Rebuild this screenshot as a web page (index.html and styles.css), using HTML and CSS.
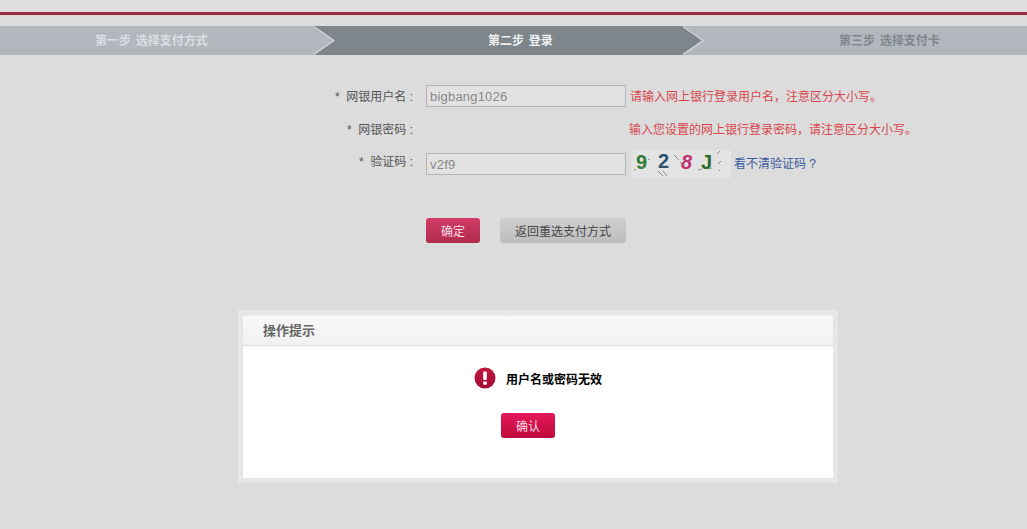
FILE: index.html
```html
<!DOCTYPE html>
<html lang="zh-CN">
<head>
    <meta charset="UTF-8">
    <meta name="viewport" content="width=device-width, initial-scale=1.0">
    <title>第二步 登录</title>
    <link rel="stylesheet" href="styles.css">
</head>
<body>
    <div class="top-line"></div>
    <div class="steps">
        <div class="step step-first">第一步&nbsp;&nbsp;选择支付方式</div>
        <div class="step step-current">第二步&nbsp;&nbsp;登录</div>
        <div class="step step-last">第三步&nbsp;&nbsp;选择支付卡</div>
    </div>
    <form class="login-form">
        <div class="form-row">
            <label for="username">*  网银用户名 :</label>
            <input type="text" id="username" value="bigbang1026">
            <span class="hint">请输入网上银行登录用户名，注意区分大小写。</span>
        </div>
        <div class="form-row row-pass">
            <label for="password">*  网银密码 :</label>
            <input type="password" id="password" class="input-plain">
            <span class="hint hint-pass">输入您设置的网上银行登录密码，请注意区分大小写。</span>
        </div>
        <div class="form-row row-code">
            <label for="code">*  验证码 :</label>
            <input type="text" id="code" value="v2f9">
            <svg class="captcha" width="100" height="28" viewBox="0 0 100 28">
                <rect width="100" height="28" fill="#e3e3e3"/>
                <text x="5" y="19" class="cap-num" fill="#2f7d35">9</text>
                <text x="27" y="18" class="cap-num" fill="#2b5270">2</text>
                <text x="50" y="19" class="cap-num cap-italic" fill="#c0336f">8</text>
                <text x="70" y="19" class="cap-num" fill="#2f6b2f">J</text>
                <path d="M3 20l2-.5M11 18l4-1M17 9l2 1M27 21l5 5M32 21l4 5M43 5l5 5M49 12l3 3M67 20l4-1M77 19l4-1M89 1l-3 3M90 11l-3 3M88 20l1 1" stroke="#8a8a8a" stroke-width="1" fill="none"/>
            </svg>
            <a class="refresh" href="#">看不清验证码 ?</a>
        </div>
        <div class="form-actions">
            <button type="button" class="btn btn-ok">确定</button>
            <button type="button" class="btn btn-back">返回重选支付方式</button>
        </div>
    </form>
    <div class="dialog">
        <div class="dialog-title">操作提示</div>
        <div class="dialog-message">
            <svg class="alert-icon" width="22" height="22" viewBox="0 0 22 22">
                <defs>
                    <linearGradient id="alertFill" x1="0" y1="0" x2="0" y2="1">
                        <stop offset="0" stop-color="#c01840"/>
                        <stop offset="1" stop-color="#a50c36"/>
                    </linearGradient>
                </defs>
                <circle cx="11" cy="11" r="10.5" fill="url(#alertFill)"/>
                <rect x="9.2" y="4.5" width="3.6" height="8.5" rx="1" fill="#fff"/>
                <rect x="9.2" y="14.5" width="3.6" height="3.2" rx="0.6" fill="#fff"/>
            </svg>
            <span>用户名或密码无效</span>
        </div>
        <button type="button" class="btn dialog-btn">确认</button>
    </div>
</body>
</html>
```

FILE: styles.css
```css
html, body {
    margin: 0;
    padding: 0;
}

body {
    position: relative;
    height: 529px;
    overflow: hidden;
    background-color: #dcdcdc;
    font-family: "Liberation Sans", "Noto Sans CJK SC", sans-serif;
    font-size: 12px;
    color: #555;
}

.top-line {
    height: 12px;
    background-color: #dedede;
    border-bottom: 3px solid #9c2b3e;
}

.steps {
    display: flex;
    height: 29px;
    margin-top: 11px;
    line-height: 31px;
    font-weight: bold;
    word-spacing: -1px;
}

.step {
    position: relative;
    box-sizing: border-box;
}

.step-first {
    width: 314px;
    padding-left: 95px;
    background-color: #b1b7bc;
    color: #dcdfe1;
    z-index: 2;
}

.step-current {
    width: 369px;
    padding-left: 174px;
    background-color: #7e858b;
    color: #f0f0f0;
    z-index: 1;
}

.step-last {
    flex: 1;
    padding-left: 156px;
    background-color: #b1b7bc;
    color: #80868b;
}

/* chevron: light outline behind, step colour in front */
.step-first::after,
.step-current::after,
.step-first::before,
.step-current::before {
    content: "";
    position: absolute;
    top: 0;
    width: 21px;
    height: 29px;
    clip-path: polygon(0 0, 100% 50%, 0 100%);
}

.step-first::after,
.step-current::after {
    right: -21px;
    background-color: #dcdcdc;
}

.step-first::before,
.step-current::before {
    right: -19px;
    z-index: 1;
}

.step-first::before {
    background-color: #b1b7bc;
}

.step-current::before {
    background-color: #7e858b;
}

.login-form {
    margin-top: 30px;
}

.form-row {
    display: flex;
    align-items: center;
    height: 22px;
    margin-bottom: 11px;
}

.row-pass {
    margin-bottom: 13px;
}

.form-row label {
    width: 413px;
    margin-right: 13px;
    margin-bottom: 2px;
    text-align: right;
    white-space: pre;
}

.form-row.row-code label {
    margin-bottom: 8px;
}

.form-row input {
    box-sizing: border-box;
    width: 200px;
    height: 22px;
    padding: 0 3px;
    border: 1px solid #b4b4b4;
    background-color: #e2e2e2;
    font-family: "Liberation Sans", sans-serif;
    font-size: 13px;
    letter-spacing: 0.2px;
    color: #888;
    outline: none;
}

.form-row .input-plain {
    border-color: #e2e2e2 transparent;
    background-color: #dcdcdc;
}

.hint {
    margin-left: 4px;
    margin-bottom: 2px;
    color: #d8474e;
}

.hint-pass {
    margin-left: 3px;
}

.captcha {
    flex-shrink: 0;
    margin-left: 5px;
}

.cap-num {
    font-family: "Liberation Sans", sans-serif;
    font-size: 20px;
    font-weight: bold;
}

.cap-italic {
    font-style: italic;
}

.refresh {
    margin-left: 3px;
    margin-bottom: 4px;
    color: #3a5b9c;
    text-decoration: none;
}

.form-actions {
    display: flex;
    margin: 43px 0 0 426px;
}

.btn {
    height: 25px;
    padding: 0;
    border: none;
    border-radius: 3px;
    font-family: "Liberation Sans", "Noto Sans CJK SC", sans-serif;
    font-size: 12px;
    cursor: pointer;
}

.btn-ok {
    width: 54px;
    background: linear-gradient(#d33b66, #b02b4e);
    color: #f6dce3;
}

.btn-back {
    width: 126px;
    margin-left: 20px;
    background: linear-gradient(#cfcfcf, #bdbdbd);
    color: #444;
}

.dialog {
    position: absolute;
    top: 310px;
    left: 238px;
    box-sizing: border-box;
    width: 600px;
    height: 173px;
    border: 5px solid #e6e6e6;
    background-color: #fff;
}

.dialog-title {
    box-sizing: border-box;
    height: 31px;
    padding-left: 20px;
    border-top: 1px solid #ececec;
    border-bottom: 1px solid #e2e2e2;
    background: linear-gradient(#f8f8f8, #f1f1f1);
    box-shadow: 0 2px 2px rgba(0, 0, 0, 0.03);
    line-height: 29px;
    font-size: 13px;
    font-weight: bold;
    color: #666;
}

.dialog-message {
    display: flex;
    align-items: center;
    justify-content: center;
    margin-top: 21px;
    font-weight: bold;
    color: #000;
}

.alert-icon {
    margin-right: 10px;
}

.dialog-btn {
    display: block;
    width: 54px;
    margin: 24px 0 0 258px;
    background: linear-gradient(#e6185a, #bd0a3c);
    color: #fbdbe5;
}
```
